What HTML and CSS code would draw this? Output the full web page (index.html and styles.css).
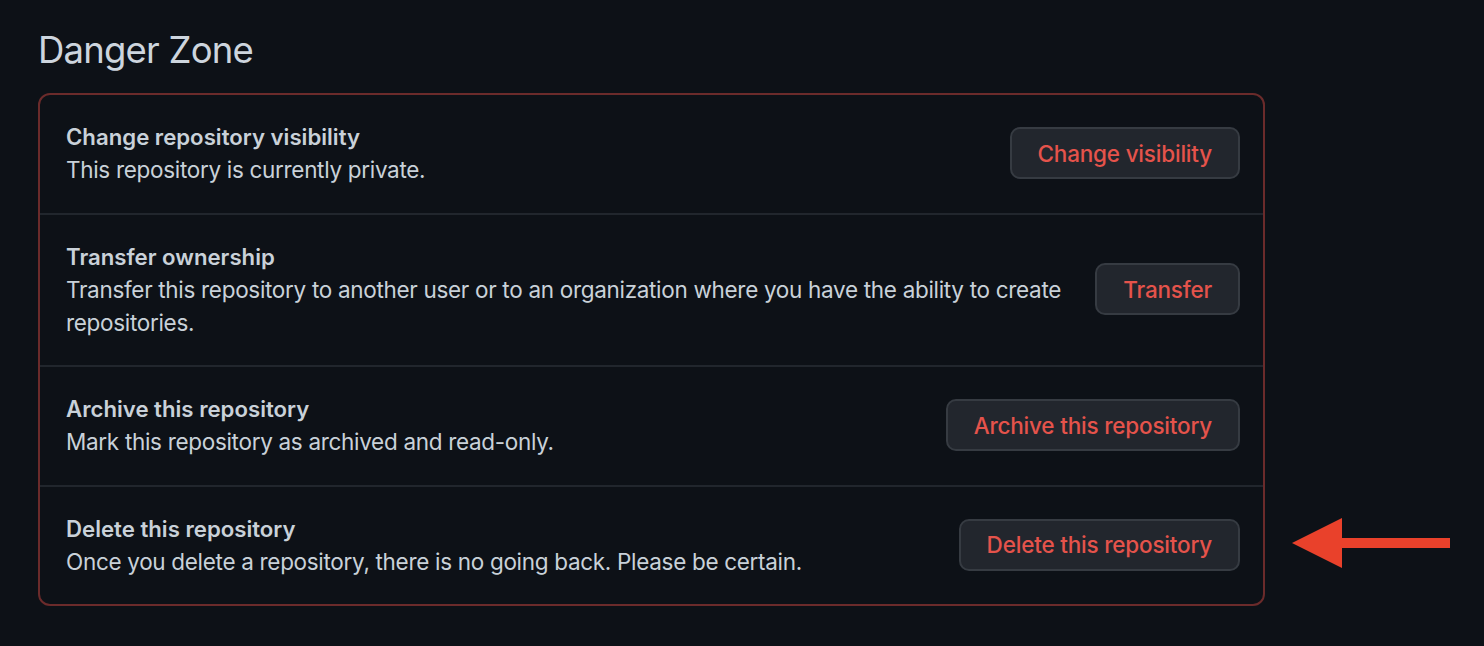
FILE: index.html
```html
<!DOCTYPE html>
<html lang="en">
<head>
<meta charset="utf-8">
<title>Danger Zone</title>
<link rel="stylesheet" href="styles.css">
</head>
<body>
  <main class="settings">
    <h2 class="subhead">Danger Zone</h2>
    <section class="danger-box">
      <div class="danger-row">
        <div class="danger-text">
          <strong class="danger-title">Change repository visibility</strong>
          <p class="danger-desc">This repository is currently private.</p>
        </div>
        <button class="btn-danger" type="button">Change visibility</button>
      </div>
      <div class="danger-row">
        <div class="danger-text">
          <strong class="danger-title">Transfer ownership</strong>
          <p class="danger-desc">Transfer this repository to another user or to an organization where you have the ability to create repositories.</p>
        </div>
        <button class="btn-danger" type="button">Transfer</button>
      </div>
      <div class="danger-row">
        <div class="danger-text">
          <strong class="danger-title">Archive this repository</strong>
          <p class="danger-desc">Mark this repository as archived and read-only.</p>
        </div>
        <button class="btn-danger" type="button">Archive this repository</button>
      </div>
      <div class="danger-row">
        <div class="danger-text">
          <strong class="danger-title">Delete this repository</strong>
          <p class="danger-desc">Once you delete a repository, there is no going back. Please be certain.</p>
        </div>
        <button class="btn-danger" type="button">Delete this repository</button>
      </div>
    </section>
  </main>
  <svg class="pointer-arrow" width="158" height="50" viewBox="0 0 158 50" aria-hidden="true">
    <polygon points="0,25 50,0 50,20 158,20 158,30 50,30 50,50" fill="#e9412b"/>
  </svg>
</body>
</html>
```
FILE: styles.css
```css
html, body {
  margin: 0;
  padding: 0;
  background: #0d1117;
}

body {
  font-family: Inter, "Noto Sans", "Liberation Sans", sans-serif;
  color: #c9d1d9;
  min-height: 646px;
  position: relative;
}

.settings {
  padding: 0 0 0 38px;
  width: 1227px;
}

.subhead {
  margin: 26px 0 19px;
  font-size: 36.5px;
  line-height: 48px;
  font-weight: 400;
  color: #cdd5de;
  letter-spacing: -0.8px;
}

.danger-box {
  border: 2px solid #6b2b2b;
  border-radius: 12px;
}

.danger-row {
  display: flex;
  align-items: center;
  gap: 32px;
  padding: 25px 23px 26.5px 26px;
}

.danger-row + .danger-row {
  border-top: 2px solid #21262d;
}

.danger-text {
  flex: 1;
  min-width: 0;
}

.danger-title {
  display: block;
  font-size: 22.2px;
  line-height: 33px;
  font-weight: 600;
  color: #c9d1d9;
}

.danger-desc {
  margin: 0;
  font-size: 22.5px;
  line-height: 33px;
  letter-spacing: -0.31px;
  color: #c9d1d9;
}

.btn-danger {
  flex: none;
  height: 52px;
  padding: 0 26px;
  border: 2px solid #363b42;
  border-radius: 10px;
  background: #22262d;
  color: #e5534b;
  font-family: inherit;
  font-size: 22.5px;
  font-weight: 500;
  letter-spacing: -0.2px;
  white-space: nowrap;
}

.pointer-arrow {
  position: absolute;
  left: 1292px;
  top: 518px;
}
```
